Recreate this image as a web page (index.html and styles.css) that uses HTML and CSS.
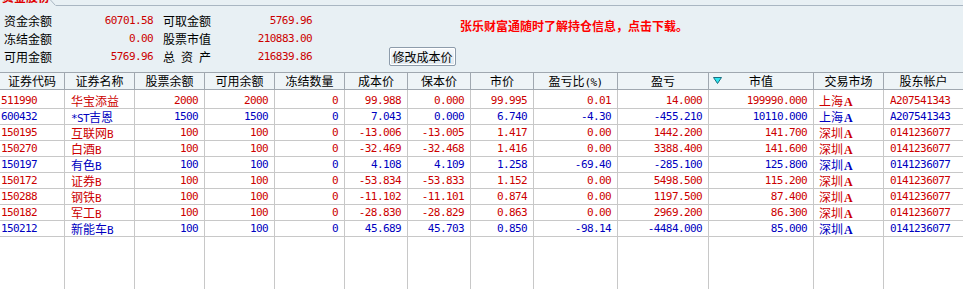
FILE: index.html
```html
<!DOCTYPE html>
<html lang="zh-CN">
<head>
<meta charset="utf-8">
<title>资金股份</title>
<link rel="stylesheet" href="styles.css">
</head>
<body>
<div class="app">
  <div class="tabbar">
    <div class="tab"><span class="tab-text">资金股份</span></div>
    <svg class="tab-edge" width="6" height="6" viewBox="0 0 6 6"><path d="M0.5 0 L5.5 5.5" stroke="#a9b6c2" stroke-width="1" fill="none"/></svg>
    <div class="tab-rest"></div>
  </div>

  <div class="summary">
    <div class="stats">
      <span class="lbl">资金余额</span><span class="val">60701.58</span><span class="lbl lbl2">可取金额</span><span class="val">5769.96</span>
      <span class="lbl">冻结金额</span><span class="val">0.00</span><span class="lbl lbl2">股票市值</span><span class="val">210883.00</span>
      <span class="lbl">可用金额</span><span class="val">5769.96</span><span class="lbl lbl2 just">总资产</span><span class="val">216839.86</span>
    </div>
    <button class="btn">修改成本价</button>
    <div class="promo">张乐财富通随时了解持仓信息，点击下载。</div>
  </div>

  <div class="grid">
    <div class="hrow">
      <div class="hc">证券代码</div>
      <div class="hc">证券名称</div>
      <div class="hc">股票余额</div>
      <div class="hc">可用余额</div>
      <div class="hc">冻结数量</div>
      <div class="hc">成本价</div>
      <div class="hc">保本价</div>
      <div class="hc">市价</div>
      <div class="hc">盈亏比<span class="asc">(%)</span></div>
      <div class="hc">盈亏</div>
      <div class="hc sorted"><svg class="sort-ico" width="9" height="8" viewBox="0 0 9 8"><path d="M0.5 0.5 H8.5 L4.5 6.5 Z" fill="#2ee6f0" stroke="#1a6f80" stroke-width="1"/></svg>市值</div>
      <div class="hc">交易市场</div>
      <div class="hc">股东帐户</div>
    </div>

    <div class="row red first">
      <div class="c code">511990</div><div class="c name">华宝添益</div><div class="c n">2000</div><div class="c n">2000</div><div class="c n">0</div><div class="c n">99.988</div><div class="c n">0.000</div><div class="c n">99.995</div><div class="c n">0.01</div><div class="c n">14.000</div><div class="c n">199990.000</div><div class="c mkt">上海<span class="a">A</span></div><div class="c acct">A207541343</div>
    </div>
    <div class="row blue">
      <div class="c code">600432</div><div class="c name"><span class="asc">*ST</span>吉恩</div><div class="c n">1500</div><div class="c n">1500</div><div class="c n">0</div><div class="c n">7.043</div><div class="c n">0.000</div><div class="c n">6.740</div><div class="c n">-4.30</div><div class="c n">-455.210</div><div class="c n">10110.000</div><div class="c mkt">上海<span class="a">A</span></div><div class="c acct">A207541343</div>
    </div>
    <div class="row red">
      <div class="c code">150195</div><div class="c name">互联网<span class="asc">B</span></div><div class="c n">100</div><div class="c n">100</div><div class="c n">0</div><div class="c n">-13.006</div><div class="c n">-13.005</div><div class="c n">1.417</div><div class="c n">0.00</div><div class="c n">1442.200</div><div class="c n">141.700</div><div class="c mkt">深圳<span class="a">A</span></div><div class="c acct">0141236077</div>
    </div>
    <div class="row red">
      <div class="c code">150270</div><div class="c name">白酒<span class="asc">B</span></div><div class="c n">100</div><div class="c n">100</div><div class="c n">0</div><div class="c n">-32.469</div><div class="c n">-32.468</div><div class="c n">1.416</div><div class="c n">0.00</div><div class="c n">3388.400</div><div class="c n">141.600</div><div class="c mkt">深圳<span class="a">A</span></div><div class="c acct">0141236077</div>
    </div>
    <div class="row blue">
      <div class="c code">150197</div><div class="c name">有色<span class="asc">B</span></div><div class="c n">100</div><div class="c n">100</div><div class="c n">0</div><div class="c n">4.108</div><div class="c n">4.109</div><div class="c n">1.258</div><div class="c n">-69.40</div><div class="c n">-285.100</div><div class="c n">125.800</div><div class="c mkt">深圳<span class="a">A</span></div><div class="c acct">0141236077</div>
    </div>
    <div class="row red">
      <div class="c code">150172</div><div class="c name">证券<span class="asc">B</span></div><div class="c n">100</div><div class="c n">100</div><div class="c n">0</div><div class="c n">-53.834</div><div class="c n">-53.833</div><div class="c n">1.152</div><div class="c n">0.00</div><div class="c n">5498.500</div><div class="c n">115.200</div><div class="c mkt">深圳<span class="a">A</span></div><div class="c acct">0141236077</div>
    </div>
    <div class="row red">
      <div class="c code">150288</div><div class="c name">钢铁<span class="asc">B</span></div><div class="c n">100</div><div class="c n">100</div><div class="c n">0</div><div class="c n">-11.102</div><div class="c n">-11.101</div><div class="c n">0.874</div><div class="c n">0.00</div><div class="c n">1197.500</div><div class="c n">87.400</div><div class="c mkt">深圳<span class="a">A</span></div><div class="c acct">0141236077</div>
    </div>
    <div class="row red">
      <div class="c code">150182</div><div class="c name">军工<span class="asc">B</span></div><div class="c n">100</div><div class="c n">100</div><div class="c n">0</div><div class="c n">-28.830</div><div class="c n">-28.829</div><div class="c n">0.863</div><div class="c n">0.00</div><div class="c n">2969.200</div><div class="c n">86.300</div><div class="c mkt">深圳<span class="a">A</span></div><div class="c acct">0141236077</div>
    </div>
    <div class="row blue">
      <div class="c code">150212</div><div class="c name">新能车<span class="asc">B</span></div><div class="c n">100</div><div class="c n">100</div><div class="c n">0</div><div class="c n">45.689</div><div class="c n">45.703</div><div class="c n">0.850</div><div class="c n">-98.14</div><div class="c n">-4484.000</div><div class="c n">85.000</div><div class="c mkt">深圳<span class="a">A</span></div><div class="c acct">0141236077</div>
    </div>
    <div class="row filler">
      <div class="f"></div><div class="f"></div><div class="f"></div><div class="f"></div><div class="f"></div><div class="f"></div><div class="f"></div><div class="f"></div><div class="f"></div><div class="f"></div><div class="f"></div><div class="f"></div><div class="f"></div>
    </div>
  </div>
</div>
</body>
</html>
```

FILE: styles.css
```css
html, body {
  margin: 0;
  padding: 0;
  background: #ffffff;
  overflow: hidden;
}

.app {
  width: 963px;
  height: 289px;
  overflow: hidden;
  font-family: "Noto Sans CJK SC", "Noto Sans", sans-serif;
  font-size: 12px;
  color: #000;
}

/* ---------- tab bar ---------- */
.tabbar {
  display: flex;
  height: 6px;
  background: #e8f0f4;
}
.tab {
  width: 50px;
  height: 6px;
  overflow: hidden;
  position: relative;
}
.tab-text {
  display: block;
  margin-top: -10px;
  padding-left: 2px;
  line-height: 14px;
  color: #e00000;
  font-weight: bold;
  white-space: nowrap;
}
.tab-edge {
  display: block;
  flex: none;
}
.tab-rest {
  flex: 1;
  border-bottom: 1px solid #a9b6c2;
  box-sizing: border-box;
  height: 6px;
}

/* ---------- summary ---------- */
.summary {
  display: flex;
  align-items: flex-start;
  height: 66px;
  background: #e8f0f4;
  box-sizing: border-box;
  padding-top: 6px;
}
.stats {
  display: grid;
  grid-template-columns: 48px 101px 58px 101px;
  grid-auto-rows: 18px;
  padding-left: 4px;
  line-height: 18px;
  width: 308px;
}
.lbl {
  white-space: nowrap;
}
.lbl2 {
  padding-left: 10px;
}
.just {
  text-align: justify;
  text-align-last: justify;
}
.val {
  text-align: right;
  color: #cc0000;
  font-family: "DejaVu Sans Mono", "Liberation Mono", monospace;
  font-size: 11px;
  letter-spacing: -0.6px;
}

.btn {
  margin: 35px 0 0 77px;
  width: 67px;
  height: 19px;
  padding: 0;
  font-family: "Noto Sans CJK SC", sans-serif;
  font-size: 12px;
  line-height: 15px;
  color: #000;
  border: 1px solid #8d9cab;
  border-radius: 2px;
  background: linear-gradient(#f7fafc, #dfe8ee);
  box-shadow: inset 0 0 0 1px #ffffff;
}

.promo {
  margin: 7px 0 0 4px;
  line-height: 14px;
  color: #ff0000;
  font-weight: bold;
  white-space: nowrap;
}

/* ---------- grid ---------- */
.grid {
  display: grid;
  grid-template-columns: 65px 70px 70px 70px 70px 63px 63px 63px 84px 91px 105px 70px 79px;
  border-top: 1px solid #a0a8b0;
}
.hrow, .row {
  display: contents;
}
.hc {
  position: relative;
  height: 16px;
  line-height: 16px;
  text-align: center;
  background: #eef4f7;
  border-right: 1px solid #a0a8b0;
  border-bottom: 1px solid #a0a8b0;
  white-space: nowrap;
}
.hc:last-child {
  border-right: none;
}
.sort-ico {
  position: absolute;
  left: 4px;
  top: 4px;
}
.asc {
  font-family: "DejaVu Sans Mono", "Liberation Mono", monospace;
  font-size: 11px;
  letter-spacing: -0.6px;
}

.red { color: #cc0000; }
.blue { color: #0000c0; }

.c {
  height: 15px;
  line-height: 15px;
  border-right: 1px solid #c8c8c8;
  border-bottom: 1px solid #c8c8c8;
  white-space: nowrap;
  overflow: hidden;
}
.first .c {
  padding-top: 3px;
}
.n, .code, .acct {
  font-family: "DejaVu Sans Mono", "Liberation Mono", monospace;
  font-size: 11px;
  letter-spacing: -0.6px;
}
.n {
  text-align: right;
  padding-right: 6px;
}
.code {
  padding-left: 1px;
}
.name {
  padding-left: 6px;
}
.mkt {
  padding-left: 5px;
}
.a {
  font-family: "Liberation Serif", serif;
  font-weight: bold;
  font-size: 12px;
  margin-left: 1px;
}
.acct {
  padding-left: 6px;
}
.f {
  height: 60px;
  border-right: 1px solid #c8c8c8;
}
.f:last-child, .c:last-child {
  border-right: none;
}
```
